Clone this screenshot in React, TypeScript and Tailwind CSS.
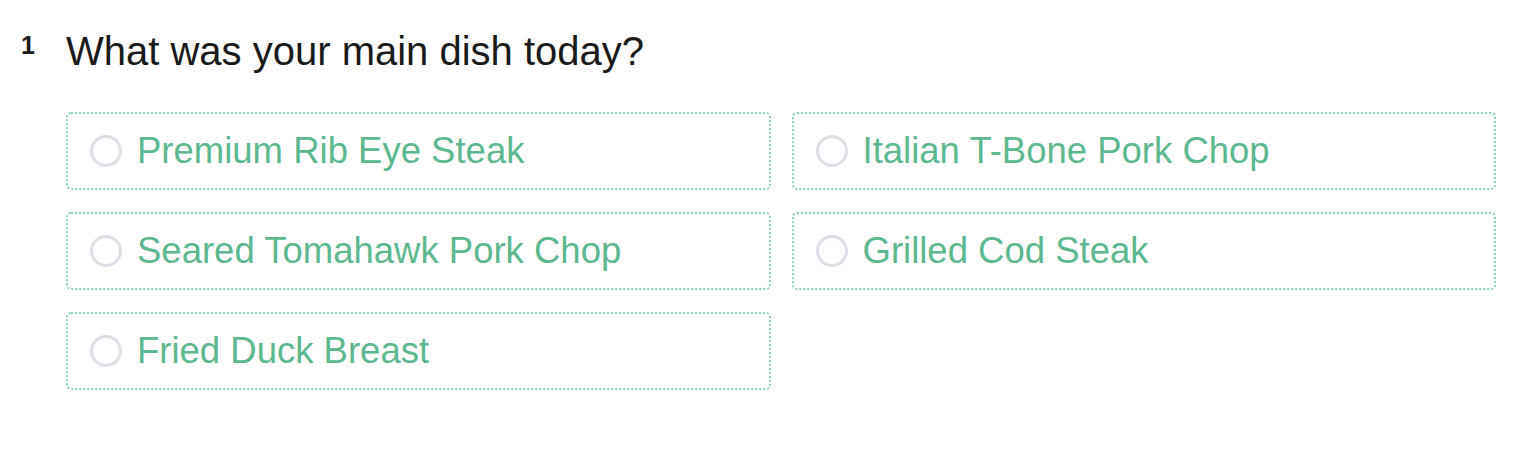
import React from "react";

const options = [
  "Premium Rib Eye Steak",
  "Italian T-Bone Pork Chop",
  "Seared Tomahawk Pork Chop",
  "Grilled Cod Steak",
  "Fried Duck Breast",
];

export default function App() {
  return (
    <div
      className="bg-white w-[1526px] h-[450px]"
      style={{ fontFamily: '"Liberation Sans", Arial, sans-serif' }}
    >
      <div className="flex pt-[28px]">
        <div className="w-[66px] pl-[21px] pt-[3px] text-[25px] font-bold leading-[28px] text-[#1a1a1a]">
          1
        </div>
        <div className="flex-1">
          <h1 className="text-[40px] leading-[46px] text-[#1a1a1a]">
            What was your main dish today?
          </h1>
          <div className="grid grid-cols-2 gap-x-[21px] gap-y-[22px] mt-[38px] w-[1430px]">
            {options.map((o) => (
              <label
                key={o}
                className="flex items-center h-[78px] border-2 border-dotted border-[#86d0b3] rounded-[5px] pl-[22px]"
              >
                <span className="w-[32px] h-[32px] rounded-full border-[3px] border-[#dedfe7] shrink-0" />
                <span className="ml-[15px] text-[36.5px] text-[#5db88f] leading-none">
                  {o}
                </span>
              </label>
            ))}
          </div>
        </div>
      </div>
    </div>
  );
}
